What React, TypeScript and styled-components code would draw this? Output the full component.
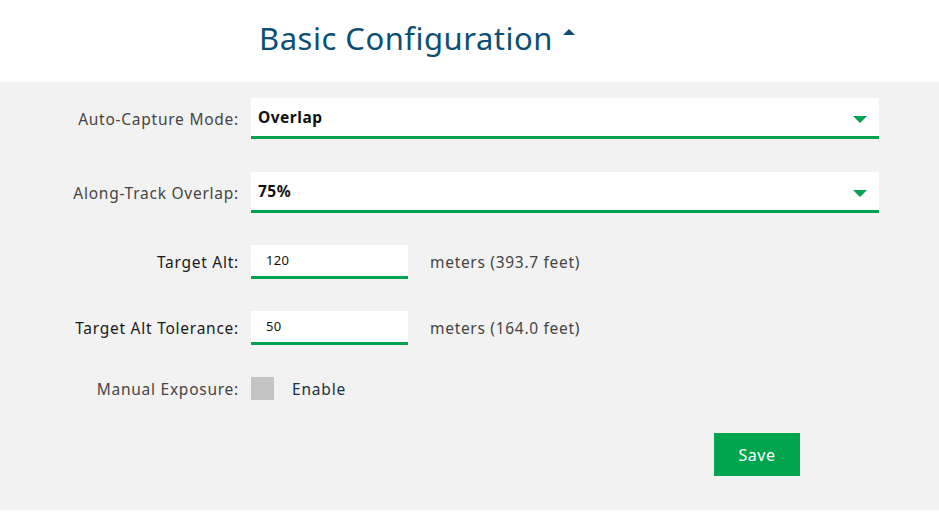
import React from "react";
import styled, { createGlobalStyle } from "styled-components";

const Global = createGlobalStyle`
  html, body { margin: 0; padding: 0; background: #ffffff; }
  body { font-family: "Noto Sans", "Open Sans", Arial, sans-serif; }
`;

const Page = styled.div`
  width: 939px;
  height: 515px;
  display: flex;
  flex-direction: column;
  background: #ffffff;
`;

const Header = styled.div`
  height: 82px;
  display: flex;
  align-items: flex-start;
  padding-left: 259px;
  box-sizing: border-box;
  padding-top: 17px;
`;

const Title = styled.h1`
  margin: 0;
  font-family: "Noto Sans", sans-serif;
  font-weight: 400;
  font-size: 31px;
  letter-spacing: 0.5px;
  line-height: 42px;
  color: #0c4f74;
  display: flex;
  align-items: flex-start;
  gap: 10px;
`;

const Caret = styled.span`
  display: inline-block;
  width: 0;
  height: 0;
  margin-top: 12px;
  border-left: 6.5px solid transparent;
  border-right: 6.5px solid transparent;
  border-bottom: 6px solid #0c4f74;
`;

const Panel = styled.div`
  height: 428px;
  background: #f2f2f2;
  box-sizing: border-box;
  padding-top: 16px;
  display: flex;
  flex-direction: column;
`;

const Form = styled.div`
  display: grid;
  grid-template-columns: 239px 628px;
  column-gap: 12px;
  align-items: center;
`;

const Label = styled.label<{ $dark?: boolean }>`
  justify-self: end;
  font-size: 15.5px;
  letter-spacing: 0.75px;
  color: ${(p) => (p.$dark ? "#1a1a1a" : "#454545")};
  white-space: nowrap;
`;

const Select = styled.div`
  height: 41px;
  background: #ffffff;
  border-bottom: 3px solid #00a14f;
  box-sizing: border-box;
  display: flex;
  align-items: center;
  justify-content: space-between;
  padding: 0 12px 0 7px;
`;

const SelectValue = styled.span`
  font-weight: 700;
  font-size: 15.5px;
  letter-spacing: 0.5px;
  color: #111111;
`;

const Arrow = styled.span`
  width: 0;
  height: 0;
  margin-top: 4px;
  border-left: 7.5px solid transparent;
  border-right: 7.5px solid transparent;
  border-top: 7px solid #00a14f;
`;

const Spacer = styled.div<{ $h: number }>`
  grid-column: 1 / -1;
  height: ${(p) => p.$h}px;
`;

const InputRow = styled.div`
  display: flex;
  align-items: center;
  gap: 22px;
`;

const Input = styled.div`
  width: 157px;
  height: 34px;
  background: #ffffff;
  border-bottom: 3px solid #00a14f;
  box-sizing: border-box;
  display: flex;
  align-items: center;
  padding-left: 15px;
  padding-bottom: 2px;
  font-size: 13px;
  letter-spacing: 0.3px;
  color: #111111;
`;

const Unit = styled.span`
  font-size: 15.5px;
  letter-spacing: 0.7px;
  color: #454545;
`;

const CheckRow = styled.div`
  display: flex;
  align-items: center;
  gap: 18px;
`;

const Check = styled.span`
  width: 23px;
  height: 23px;
  background: #c4c4c4;
`;

const CheckText = styled.span`
  font-size: 15.5px;
  letter-spacing: 0.8px;
  color: #1b3140;
`;

const Actions = styled.div`
  display: flex;
  padding-left: 714px;
  margin-top: 33px;
`;

const SaveButton = styled.button`
  width: 86px;
  height: 43px;
  border: none;
  background: #00a550;
  color: #ffffff;
  font-family: "Noto Sans", sans-serif;
  font-size: 16px;
  letter-spacing: 0.5px;
  padding: 0;
  cursor: pointer;
`;

const BottomStrip = styled.div`
  flex: 1;
  background: #ffffff;
`;

export default function App() {
  return (
    <>
      <Global />
      <Page>
        <Header>
          <Title>
            Basic Configuration
            <Caret />
          </Title>
        </Header>
        <Panel>
          <Form>
            <Label>Auto-Capture Mode:</Label>
            <Select>
              <SelectValue>Overlap</SelectValue>
              <Arrow />
            </Select>
            <Spacer $h={33} />
            <Label>Along-Track Overlap:</Label>
            <Select>
              <SelectValue>75%</SelectValue>
              <Arrow />
            </Select>
            <Spacer $h={32} />
            <Label $dark>Target Alt:</Label>
            <InputRow>
              <Input>120</Input>
              <Unit>meters (393.7 feet)</Unit>
            </InputRow>
            <Spacer $h={32} />
            <Label $dark>Target Alt Tolerance:</Label>
            <InputRow>
              <Input>50</Input>
              <Unit>meters (164.0 feet)</Unit>
            </InputRow>
            <Spacer $h={32} />
            <Label>Manual Exposure:</Label>
            <CheckRow>
              <Check />
              <CheckText>Enable</CheckText>
            </CheckRow>
          </Form>
          <Actions>
            <SaveButton>Save</SaveButton>
          </Actions>
        </Panel>
        <BottomStrip />
      </Page>
    </>
  );
}
